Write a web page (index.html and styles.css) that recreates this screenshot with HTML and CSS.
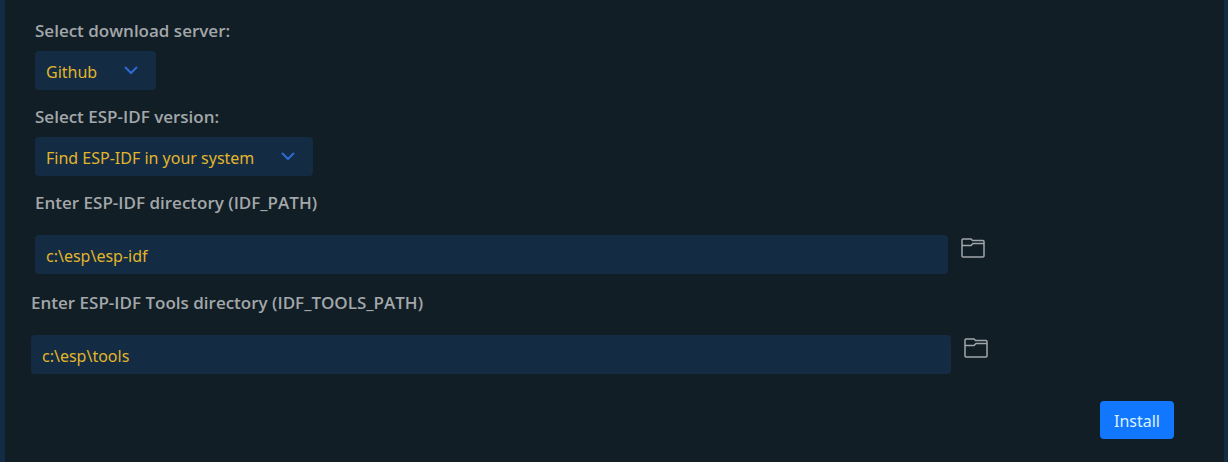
FILE: index.html
```html
<!DOCTYPE html>
<html lang="en">
<head>
<meta charset="utf-8">
<title>ESP-IDF Setup</title>
<link rel="stylesheet" href="styles.css">
</head>
<body>
<form class="setup">
  <div class="field">
    <label class="label" for="server">Select download server:</label>
    <div class="select">
      <select class="control" id="server"><option>Github</option></select>
      <svg class="chevron" viewBox="0 0 14 9" aria-hidden="true"><path d="M1 1l6 6 6-6"/></svg>
    </div>
  </div>
  <div class="field">
    <label class="label" for="version">Select ESP-IDF version:</label>
    <div class="select">
      <select class="control" id="version"><option>Find ESP-IDF in your system</option></select>
      <svg class="chevron" viewBox="0 0 14 9" aria-hidden="true"><path d="M1 1l6 6 6-6"/></svg>
    </div>
  </div>
  <div class="field path-field">
    <label class="label" for="idf-path">Enter ESP-IDF directory (IDF_PATH)</label>
    <div class="path-row">
      <input class="control path" id="idf-path" type="text" value="c:\esp\esp-idf">
      <button class="browse" type="button" aria-label="Browse for ESP-IDF directory">
        <svg class="folder" viewBox="0 0 24 20" aria-hidden="true"><path d="M2 1h8l1.500 1.500H22q1 0 1 1V18q0 1-1 1H2q-1 0-1-1V2q0-1 1-1zM1 7.500h9L12 5.500h11"/></svg>
      </button>
    </div>
  </div>
  <div class="field path-field wide">
    <label class="label" for="tools-path">Enter ESP-IDF Tools directory (IDF_TOOLS_PATH)</label>
    <div class="path-row">
      <input class="control path" id="tools-path" type="text" value="c:\esp\tools">
      <button class="browse" type="button" aria-label="Browse for tools directory">
        <svg class="folder" viewBox="0 0 24 20" aria-hidden="true"><path d="M2 1h8l1.500 1.500H22q1 0 1 1V18q0 1-1 1H2q-1 0-1-1V2q0-1 1-1zM1 7.500h9L12 5.500h11"/></svg>
      </button>
    </div>
  </div>
  <div class="actions"><button class="install" type="submit">Install</button></div>
</form>
</body>
</html>
```
FILE: styles.css
```css
* { box-sizing: border-box; }

body {
  margin: 0;
  background: #111e25;
  font-family: "Segoe UI", "Noto Sans", "Open Sans", sans-serif;
  font-size: 16px;
  line-height: 24px;
}

.setup {
  min-height: 100vh;
  padding: 19px 50px 22px 30px;
  border: solid #132c44;
  border-width: 0 4px 0 5px;
}

.field { margin-bottom: 15px; }

.label {
  display: block;
  margin-bottom: 8px;
  color: #a3a7aa;
  font-family: "Segoe UI", "Open Sans", sans-serif;
  font-size: 17px;
  font-weight: 600;
}

.control {
  height: 39px;
  padding: 2px 11px 0;
  border: 0;
  border-radius: 4px;
  background: #132c44;
  color: #e2b52a;
  font: inherit;
}

.select {
  display: grid;
  width: fit-content;
}

.select .control {
  grid-area: 1 / 1;
  padding-right: 58px;
  appearance: none;
}

.chevron {
  grid-area: 1 / 1;
  place-self: center end;
  width: 14px;
  height: 9px;
  margin-right: 18px;
  fill: none;
  stroke: #2e68d4;
  stroke-width: 2;
  pointer-events: none;
}

.path-field { margin-right: 188px; margin-bottom: 17px; }
.path-field .label { margin-bottom: 20px; }
.wide { margin-left: -4px; margin-right: 185px; margin-bottom: 27px; }

.path-row {
  display: flex;
  gap: 13px;
}

.path { flex: 1; min-width: 0; }

.browse {
  height: 26px;
  padding: 0;
  border: 0;
  background: none;
}

.folder {
  display: block;
  width: 24px;
  height: 20px;
  margin-right: 1px;
  fill: none;
  stroke: #a0a6ac;
  stroke-width: 1.5;
}

.actions { display: flex; justify-content: flex-end; }

.install {
  height: 38px;
  padding: 2px 14px 0;
  border: 0;
  border-radius: 4px;
  background: #1277ff;
  color: #d9f2ff;
  font: inherit;
}
```
